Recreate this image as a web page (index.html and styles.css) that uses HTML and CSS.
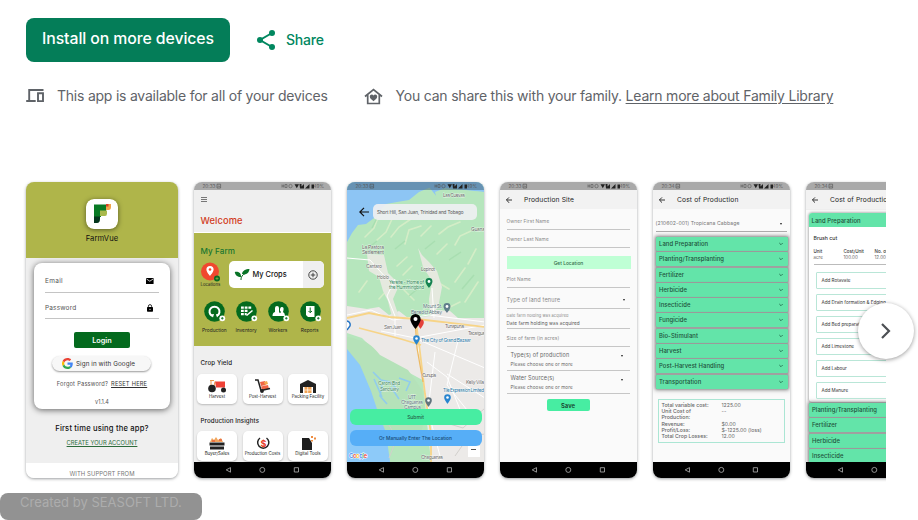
FILE: index.html
```html
<!DOCTYPE html>
<html lang="en">
<head>
<meta charset="utf-8">
<title>FarmVue</title>
<link rel="stylesheet" href="styles.css">
</head>
<body>
<svg class="defs" width="0" height="0">
  <symbol id="status" viewBox="0 0 138 8">
    <path d="M23 2.2h3.6v3.8H23zM24 4.8l.8-1 .9 1" fill="none" stroke="#4b4b4b" stroke-width=".6"/>
    <path d="M88 2.5v3M89.700 2.500v3M88 4h1.700M91 2.500h2v3h-2z" fill="none" stroke="#555" stroke-width=".6"/>
    <circle cx="96.500" cy="4.100" r="1.700" fill="none" stroke="#555" stroke-width=".6"/>
    <path d="M100.500 2.300h4.500l-2.200 3.900zM105.500 2h2v2.500l2.500-2.500v4.500h-4zM111 6.500l4.500-4.500v4.500zM117.500 2.500h2.500v4h-2.500z" fill="#222"/>
  </symbol>
  <symbol id="nav" viewBox="0 0 138 16">
    <path d="M36.500 5.600v4.600l-4.300-2.300zM100.300 5.700h4.200v4.300h-4.200z" fill="none" stroke="#b5b5b5" stroke-width=".8"/>
    <circle cx="68.300" cy="7.900" r="2.500" fill="none" stroke="#b5b5b5" stroke-width=".8"/>
  </symbol>
  <symbol id="back" viewBox="0 0 8 8"><path d="M7 4H1.500M4 1.400L1.400 4 4 6.600" fill="none" stroke="#222" stroke-width=".9"/></symbol>
  <symbol id="chev" viewBox="0 0 6 6"><path d="M1.300 2l1.700 1.700L4.700 2" fill="none" stroke="#1b5f43" stroke-width=".8"/></symbol>
  <symbol id="pin" viewBox="0 0 8 11"><path d="M4 0a3.800 3.800 0 0 0-3.800 3.800C.2 6.500 4 11 4 11s3.800-4.500 3.800-7.200A3.800 3.800 0 0 0 4 0z"/></symbol>
</svg>

<header class="actions">
  <button class="install">Install on more devices</button>
  <a class="share">
    <svg width="20" height="22" viewBox="0 0 20 22"><path d="M16 4L4 11l12 7" fill="none" stroke="#01875f" stroke-width="2"/><g fill="#01875f"><circle cx="16" cy="4" r="3"/><circle cx="4" cy="11" r="3"/><circle cx="16" cy="18" r="3"/></g></svg>
    <span>Share</span>
  </a>
</header>

<section class="notes">
  <div class="note">
    <svg width="19" height="16" viewBox="0 0 19 16"><path d="M17.500 2H3.200v10.500M.2 13h9.500M12 5.200h5v7.900h-5z" fill="none" stroke="#5f6368" stroke-width="1.900"/></svg>
    <span class="n1">This app is available for all of your devices</span>
  </div>
  <div class="note">
    <svg width="19" height="17" viewBox="0 0 19 17"><path d="M1 8.500l8.500-7 8.500 7M3.700 7v8.500h11.600V7" fill="none" stroke="#5f6368" stroke-width="1.700"/><path d="M9.500 13.200C7 11.200 5.800 10.200 5.800 8.500c0-2 2.600-2.700 3.700-1 1.100-1.700 3.700-1 3.700 1 0 1.700-1.200 2.700-3.700 4.700z" fill="#5f6368"/></svg>
    <span class="n2">You can share this with your family. <a class="learn">Learn more about Family Library</a></span>
  </div>
</section>

<main class="gallery-wrap">
<div class="gallery">

  <article class="shot login">
    <div class="brand">
      <svg class="logo" width="32" height="30" viewBox="0 0 32 30"><rect width="32" height="30" rx="8" fill="#fff"/><path d="M8 5.500h13v5.500h-1v1h-5v6H8z" fill="#087a24"/><path d="M8 17.500h6v2.500q0 4-3 4H8z" fill="#04361d"/><path d="M14 11.500h7v3q0 2.500-2 2.500h-5z" fill="#a9b94c"/><path d="M20 5h5v3q0 3-2.500 3H20z" fill="#f0a44b"/><path d="M20 5h2.500v2.500H20z" fill="#d6402a"/></svg>
      <span>FarmVue</span>
    </div>
    <div class="card">
      <div class="field"><span>Email</span><svg width="8" height="6" viewBox="0 0 8 6"><rect width="7.600" height="6" rx=".6"/><path d="M.5 1l3.300 2.200L7.100 1" fill="none" stroke="#fff" stroke-width=".8"/></svg></div>
      <div class="field pass"><span>Password</span><svg width="8" height="8" viewBox="0 0 8 8"><rect x="1" y="3" width="6" height="4.800" rx=".7"/><path d="M2.400 3.500V2.200a1.600 1.600 0 0 1 3.200 0v1.300" fill="none" stroke="#000" stroke-width=".8"/><circle cx="4" cy="5.300" r=".6" fill="#fff"/></svg></div>
      <button class="go">Login</button>
      <button class="google"><svg width="11" height="11" viewBox="0 0 48 48"><path fill="#EA4335" d="M24 9.500c3.540 0 6.710 1.220 9.210 3.600l6.850-6.850C35.900 2.380 30.470 0 24 0 14.620 0 6.510 5.380 2.560 13.220l7.980 6.190C12.430 13.720 17.740 9.500 24 9.500z"/><path fill="#4285F4" d="M46.980 24.550c0-1.570-.15-3.090-.38-4.550H24v9.020h12.940c-.58 2.960-2.260 5.480-4.780 7.180l7.730 6c4.510-4.180 7.090-10.360 7.090-17.650z"/><path fill="#FBBC05" d="M10.530 28.590c-.48-1.450-.76-2.990-.76-4.590s.27-3.140.76-4.590l-7.980-6.190C.92 16.460 0 20.120 0 24s.92 7.540 2.560 10.780l7.970-6.190z"/><path fill="#34A853" d="M24 48c6.480 0 11.930-2.130 15.890-5.810l-7.730-6c-2.150 1.450-4.920 2.300-8.160 2.300-6.260 0-11.570-4.220-13.470-9.910l-7.980 6.190C6.510 42.620 14.620 48 24 48z"/></svg><span>Sign in with Google</span></button>
      <p class="forgot">Forgot Password? <a>RESET HERE</a></p>
      <p class="ver">v1.1.4</p>
    </div>
    <p class="first">First time using the app?</p>
    <a class="create">CREATE YOUR ACCOUNT</a>
    <p class="support">WITH SUPPORT FROM</p>
  </article>

  <article class="shot phone home">
    <div class="bar"><svg><use href="#status"/></svg><span>20:33</span><span>49%</span></div>
    <div class="screen">
      <div class="welcome"><svg width="6" height="5" viewBox="0 0 6 5"><path d="M0 .5h6M0 2.500h6M0 4.500h6" stroke="#444" stroke-width=".7"/></svg><b>Welcome</b></div>
      <div class="farm">
        <h3>My Farm</h3>
        <div class="crops">
          <div class="loc"><svg width="20" height="20" viewBox="0 0 20 20"><circle cx="9" cy="9.500" r="9" fill="#f0482f"/><path d="M9 4a3.600 3.600 0 0 0-3.600 3.600C5.400 10.200 9 14 9 14s3.600-3.800 3.600-6.400A3.600 3.600 0 0 0 9 4z" fill="#fff"/><circle cx="9" cy="7.500" r="1.300" fill="#f0482f"/><circle cx="16" cy="16.500" r="3" fill="#0a6b22"/><path d="M14.500 16.500h3M16 15v3" stroke="#9db84b" stroke-width=".6"/></svg><span>Locations</span></div>
          <div class="mycrops"><svg width="16" height="13" viewBox="0 0 16 13"><path d="M7 12C6.500 9 9 6.500 11 5.500" fill="none" stroke="#0a6b22" stroke-width="1"/><path d="M.8 4C4 3.200 7.500 5 7 9 3.500 9 1 7 .8 4zM8 6C8.500 2.500 11.500 1 15.500 1 15 5 12 7.500 8 6z" fill="#087326"/></svg><span>My Crops</span><i><svg width="10" height="10" viewBox="0 0 9 9"><circle cx="4.500" cy="4.500" r="3.800" fill="none" stroke="#333" stroke-width=".8"/><path d="M2.500 4.500h4M4.500 2.500v4" stroke="#333" stroke-width=".8"/></svg></i></div>
        </div>
        <div class="quads">
          <div><svg viewBox="0 0 22 22"><circle cx="10.500" cy="10.500" r="10.300" fill="#046a1e"/><path d="M8 15a5 5 0 1 1 5 0" fill="none" stroke="#fff" stroke-width="2"/><path d="M6 13.500l4-.5-1 3.500zM12 13l3 .5-2 3z" fill="#fff"/><circle cx="18.300" cy="17.300" r="2.900" fill="#fff"/><path d="M17 17.300h2.600M18.300 16v2.600" stroke="#046a1e" stroke-width=".8"/></svg><span>Production</span></div>
          <div><svg viewBox="0 0 22 22"><circle cx="10.500" cy="10.500" r="10.300" fill="#046a1e"/><path d="M5 5.500h2.800v2.300H5zM8.700 5.500h2.800v2.300H8.700zM12.400 5.500h2.800v2.300h-2.800zM5 8.800h2.800v2.300H5zM8.700 8.800h2.800v2.300H8.700zM5 12h2.800v2.300H5zM8.700 12h2v2.300h-2z" fill="#fff"/><path d="M10.500 14.500l6-5" stroke="#fff" stroke-width="1.600"/><circle cx="18.300" cy="17.300" r="2.900" fill="#fff"/><path d="M17 17.300h2.600M18.300 16v2.600" stroke="#046a1e" stroke-width=".8"/></svg><span>Inventory</span></div>
          <div><svg viewBox="0 0 22 22"><circle cx="10.500" cy="10.500" r="10.300" fill="#046a1e"/><path d="M4.500 15q0-3.500 2.500-4V7q0-2 2-2t2 2v4l3 4zM10 15l3-4q-1.500-1-1-3 .5-2.300 2-2 2 0 1.500 3l-.5 2q2 1 2 4z" fill="#fff"/><circle cx="18.300" cy="17.300" r="2.900" fill="#fff"/><path d="M17 17.300h2.600M18.300 16v2.600" stroke="#046a1e" stroke-width=".8"/></svg><span>Workers</span></div>
          <div><svg viewBox="0 0 22 22"><circle cx="10.500" cy="10.500" r="10.300" fill="#046a1e"/><path d="M6 5h8.500v11H8L6 14z" fill="#fff"/><path d="M10.200 6.500v5M8.500 10l1.700 1.700L12 10" fill="none" stroke="#046a1e" stroke-width="1"/><circle cx="18.300" cy="17.300" r="2.900" fill="#fff"/><path d="M17 17.300h2.600M18.300 16v2.600" stroke="#046a1e" stroke-width=".8"/></svg><span>Reports</span></div>
        </div>
      </div>
      <h4>Crop Yield</h4>
      <div class="tiles">
        <div><svg viewBox="0 0 20 14"><path d="M8 2.500h10v6H9z" fill="#ef4136"/><path d="M3 1.500h4M4 2v4M8 2.500L7 7" stroke="#eb8b35" stroke-width=".9"/><circle cx="5" cy="9.500" r="3.800" fill="#222"/><circle cx="16.500" cy="11" r="2.500" fill="#222"/></svg><span>Harvest</span></div>
        <div><svg viewBox="0 0 20 14"><path d="M7 3l5-1 1 4-5 1zM8 7.500l7-1.500 1 4-7 1z" fill="#ef6545"/><path d="M11 3l3-1 1 3-3 1z" fill="#f3a94e"/><path d="M2 1h3l3 10.500L17 9.500" fill="none" stroke="#222" stroke-width="1.500"/><circle cx="9" cy="12" r="1.900" fill="#222"/></svg><span>Post-Harvest</span></div>
        <div><svg viewBox="0 0 20 14"><path d="M2 5l8-4 8 4v9h-3V7H5v7H2z" fill="#222"/><path d="M3 5h14v3H3z" fill="#222"/><path d="M6.500 8h7v6h-7z" fill="#f2a354"/><path d="M9.700 8v6M6.500 11h7" stroke="#fff" stroke-width=".7"/></svg><span>Packing Facility</span></div>
      </div>
      <h4 class="ins">Production Insights</h4>
      <div class="tiles">
        <div><svg viewBox="0 0 20 14"><path d="M3 6l2-4 2 2 2-3 2 3 3-2 2 4z" fill="#f2a65e"/><path d="M5 5h3M12 4h3" stroke="#e0402b" stroke-width="1.200"/><path d="M2.500 6.500h15v3h-15zM3 10.500h14v3H3z" fill="#222"/></svg><span>Buyer/Sales</span></div>
        <div><svg viewBox="0 0 20 14"><path d="M7 2a5.600 5.600 0 1 0 6.500 0" fill="none" stroke="#222" stroke-width="1.500"/><text x="7.400" y="11" font-size="9" font-weight="700" fill="#e63b26">$</text></svg><span>Production Costs</span></div>
        <div><svg viewBox="0 0 20 14"><path d="M4 2h7l3 5v7H4z" fill="#1e1e1e"/><path d="M13 0h2v2h-2zM16 1.500h2v2h-2zM13 4h2v1.500h-2z" fill="#ee8c40"/></svg><span>Digital Tools</span></div>
      </div>
    </div>
    <svg class="nav"><use href="#nav"/></svg>
  </article>

  <article class="shot phone mapshot">
    <svg class="map" width="138" height="280" viewBox="0 0 138 280">
      <rect width="138" height="280" fill="#b6e6bd"/>
      <path d="M0 0h92l-8 5-12 5-10 8-12 2-11 2-7 7-5 7-8 6-8 1-6 8-5 9z" fill="#8dc5f4"/>
      <path d="M78 0h60v10l-28-2-11 8-9-1z" fill="#8dc5f4"/><path d="M88 10l10-4 20 2 20 2v8H90z" fill="#b6e6bd"/>
      <g fill="none" stroke="#dcefc9" stroke-width="1.600" opacity=".8" stroke-linecap="round"><path d="M18 55l9-9 5-13M30 58l9-8 7-15M44 55l8-10 12-8M58 62l4-14 12-4M74 54l10-10M92 52l9-7 12-5M108 63l5-9 11-5M121 82l8-15M90 72l10-10M65 84l-9 9M108 100l10-14M118 120l13-20M40 108l-8 9M92 101l10 6M50 84l10-9M12 110l8-11M67 118l-10-10M101 126l12-6"/></g>
      <g fill="none" stroke="#a5dcae" stroke-width="1.500" opacity=".8"><path d="M20 67l10-8M48 67l10-8M78 67l10-8M102 78l12-8M74 104l-12 10M115 107l12-14M25 46l5-10"/></g>
      <path d="M0 124l20 3 12-2 10 8 10-4 9 7 22-2 6-6 14 1 8 7h27v60l-30 1-27 4-22-12-26-15-18-18-15-5z" fill="#ece9e7"/>
      <path d="M72 158l66-14v136H84l-6-60z" fill="#eceae8"/>
      <path d="M20 72l17 1 4 18 8 8 1 9-4 9 6 18h-7l-4-16-5-10-4-14-10-6zM71 66l4 7 7 7 8 9 5 16-4 21-8 7-1-16 3-18-9-14z" fill="#e5e9df"/>
      <path d="M0 163q14 4 17 15l10 20 8 15 2 22 6 45H0z" fill="#8dcaf9"/>
      <path d="M0 155q6 0 11 3 10 0 22 15l28 15 14 20 4 28-6 16-33 1-8-20-8-24-11-26-13-16z" fill="#b5e2b9"/>
      <g fill="none" stroke="#91ccec" stroke-width="1.600"><path d="M26 190l8 8 9 2 8 8M35 203l-2 11 7 8M27 197l8 18M44 205l8 12M52 196l11 4-4 9"/></g>
      <g fill="none" stroke="#fff" stroke-width="1"><path d="M0 133l24-5 22 10 36-5 56 7M48 97l-8 17 8 20 0 20M34 149l34 7 70-13M70 148l2 24M72 158l66 28M80 180l20 15 14 35M88 170l-7 58 13 50M100 192l38 24M112 155l-12 48 24 30M40 97l-17-19-23-2M85 106l2 30"/></g>
      <g fill="none" stroke="#f7d487" stroke-width="1.800"><path d="M0 136l22-5 20 4 28 2 68 8M69 140l4 30 5 42 6 40v28M12 146l42 11 20 6"/></g>
      <path d="M68 138l2 28 6 34" fill="none" stroke="#edba64" stroke-width="1.300"/>
      <path d="M108 274l14-20 16-2M96 240l20 6 22-20M40 240l10 16-8 20" fill="none" stroke="#d2d0cc"/>
      <g class="places">
        <text x="96" y="15" textLength="22">Las Cuevas</text><text x="124" y="49" textLength="14">Guana</text>
        <text x="15" y="67" textLength="22">La Pastora</text><text x="15" y="72" textLength="22">Settlement</text>
        <text x="19" y="86" textLength="16">Cantaro</text><text x="30" y="97" textLength="12">Hololo</text>
        <text x="74" y="89" textLength="14">Lopinot</text>
        <g fill="#32865b"><text x="42" y="102" textLength="35">Yerette - Home of</text><text x="42" y="107" textLength="35">the Hummingbird</text></g>
        <g fill="#607680"><text x="76" y="126" textLength="19">Mount St.</text><text x="64" y="132" textLength="31">Benedict Abbey</text></g>
        <text x="37" y="147" textLength="18">San Juan</text><text x="98" y="146" textLength="19">Tunapuna</text>
        <text x="121" y="153" textLength="17">Tacarigua</text>
        <text x="74" y="160" textLength="50" class="shop">The City of Grand Bazaar</text>
        <text x="75" y="195" textLength="14">Cunupia</text><text x="119" y="202" textLength="18">Kelly Villa</text>
        <g fill="#41865e"><text x="31" y="203" textLength="22">Caroni Bird</text><text x="33" y="209" textLength="19">Sanctuary</text></g>
        <text x="96" y="210" textLength="41" class="shop">Tile Expression Limited</text>
        <g fill="#607680"><text x="61" y="217" textLength="8">UTT</text><text x="54" y="222" textLength="22">Chaguanas</text><text x="57" y="227" textLength="17">Campus</text></g>
        <text x="74" y="277" textLength="22">Chaguanas</text>
      </g>
      <use href="#pin" x="78" y="96" width="8" height="10" fill="#148251"/><circle cx="82" cy="99.500" r="1.400" fill="#fff"/>
      <use href="#pin" x="96" y="121" width="8" height="10" fill="#607d8b"/><circle cx="100" cy="124.500" r="1.400" fill="#fff"/>
      <use href="#pin" x="66" y="153" width="7" height="10" fill="#2885cf"/><circle cx="69.500" cy="156.500" r="1.300" fill="#fff"/>
      <use href="#pin" x="97" y="212" width="7" height="10" fill="#2885cf"/><circle cx="100.500" cy="215.500" r="1.300" fill="#fff"/>
      <use href="#pin" x="78" y="215" width="7" height="10" fill="#60747e"/><circle cx="81.500" cy="218.500" r="1.300" fill="#fff"/>
      <use href="#pin" x="70" y="137" width="7" height="10" fill="#e4413a"/>
      <use href="#pin" x="62" y="132" width="13" height="15"/><circle cx="68.500" cy="137" r="2" fill="#fff"/>
      <path d="M0 139q4 1 3 5l-3 4" fill="#fff" stroke="#2374c6" stroke-width="1.400"/>
      <g class="gmark"><text x="2" y="276" textLength="18" fill="#4285f4">G<tspan fill="#ea4335">o</tspan><tspan fill="#fbbc05">o</tspan><tspan fill="#4285f4">g</tspan><tspan fill="#34a853">l</tspan><tspan fill="#ea4335">e</tspan></text></g>
    </svg>
    <div class="mapui">
      <div class="bar clear"><svg><use href="#status"/></svg><span>20:33</span><span>49%</span></div>
      <div class="search"><svg width="10" height="10" viewBox="0 0 10 10"><path d="M10 5H1M5 .8L.8 5 5 9.200" fill="none" stroke="#111" stroke-width="1.200"/></svg><span>Short Hill, San Juan, Trinidad and Tobago</span></div>
      <button class="submit">Submit</button>
      <button class="manual">Or Manually Enter The Location</button>
      <b class="minus"></b>
    </div>
    <svg class="nav"><use href="#nav"/></svg>
  </article>

  <article class="shot phone site">
    <div class="bar"><svg><use href="#status"/></svg><span>20:33</span><span>49%</span></div>
    <div class="title"><svg width="8" height="8"><use href="#back"/></svg><span>Production Site</span></div>
    <div class="screen form">
      <div class="line a">Owner First Name</div>
      <div class="line b">Owner Last Name</div>
      <button class="getloc">Get Location</button>
      <div class="line c">Plot Name</div>
      <div class="line d sel">Type of land tenure</div>
      <div class="line e"><small>Date farm holding was acquired</small><em>Date farm holding was acquired</em></div>
      <div class="line f">Size of farm (in acres)</div>
      <div class="line g sel"><strong>Type(s) of production</strong><u>Please choose one or more</u></div>
      <div class="line h sel"><strong>Water Source(s)</strong><u>Please choose one or more</u></div>
      <button class="save">Save</button>
    </div>
    <svg class="nav"><use href="#nav"/></svg>
  </article>

  <article class="shot phone cost">
    <div class="bar"><svg><use href="#status"/></svg><span>20:34</span><span>49%</span></div>
    <div class="title"><svg width="8" height="8"><use href="#back"/></svg><span>Cost of Production</span></div>
    <div class="screen">
      <div class="pick sel">(210602-001) Tropicana Cabbage</div>
      <ul class="acc">
        <li>Land Preparation<svg><use href="#chev"/></svg></li>
        <li>Planting/Transplanting<svg><use href="#chev"/></svg></li>
        <li>Fertilizer<svg><use href="#chev"/></svg></li>
        <li>Herbicide<svg><use href="#chev"/></svg></li>
        <li>Insecticide<svg><use href="#chev"/></svg></li>
        <li>Fungicide<svg><use href="#chev"/></svg></li>
        <li>Bio-Stimulant<svg><use href="#chev"/></svg></li>
        <li>Harvest<svg><use href="#chev"/></svg></li>
        <li>Post-Harvest Handling<svg><use href="#chev"/></svg></li>
        <li>Transportation<svg><use href="#chev"/></svg></li>
      </ul>
      <dl class="totals">
        <dt>Total variable cost:</dt><dd>1225.00</dd>
        <dt>Unit Cost of Production:</dt><dd>--</dd>
        <dt>Revenue:</dt><dd>$0.00</dd>
        <dt>Profit/Loss:</dt><dd>$-1225.00 (loss)</dd>
        <dt>Total Crop Losses:</dt><dd>12.00</dd>
      </dl>
    </div>
    <svg class="nav"><use href="#nav"/></svg>
  </article>

  <article class="shot phone land">
    <div class="bar"><svg><use href="#status"/></svg><span>20:34</span></div>
    <div class="title"><svg width="8" height="8"><use href="#back"/></svg><span>Cost of Production</span></div>
    <div class="screen">
      <div class="panel">
        <h5>Land Preparation</h5>
        <p class="brush">Brush cut</p>
        <div class="cols"><div><b>Unit</b>acre</div><div><b>Cost/Unit</b>100.00</div><div><b>No. of units</b>12.00</div></div>
        <div class="adds">
          <span>Add Rotavate</span><span>Add Drain formation &amp; Edging</span><span>Add Bed preparation</span><span>Add Limestone</span><span>Add Labour</span><span>Add Manure</span>
        </div>
      </div>
      <ul class="acc"><li>Planting/Transplanting</li><li>Fertilizer</li><li>Herbicide</li><li>Insecticide</li></ul>
    </div>
    <svg class="nav"><use href="#nav"/></svg>
  </article>
</div>
<button class="next"><svg width="12" height="18" viewBox="0 0 12 18"><path d="M2 2l7 7-7 7" fill="none" stroke="#4d5054" stroke-width="2.200"/></svg></button>
</main>

<div class="credit">Created by SEASOFT LTD.</div>
</body>
</html>
```
FILE: styles.css
```css
* { box-sizing: border-box; }
body { margin: 0; width: 918px; height: 520px; overflow: hidden; background: #fff; font-family: Inter, "Open Sans", sans-serif; position: relative; }
p, h3, h4, h5, ul, dl, dd { margin: 0; padding: 0; font-weight: 500; }
button { border: 0; padding: 0; font-family: inherit; display: block; }
.defs { position: absolute; }
svg { flex: none; display: block; }

.actions { display: flex; align-items: center; padding: 18px 0 0 26px; height: 62px; }
.install { width: 204px; height: 44px; border-radius: 8px; background: #047d58; color: #fff; font-size: 15.800px; font-weight: 500; letter-spacing: -.08px; line-height: 42px; padding-bottom: 2px; white-space: nowrap; }
.share { display: flex; align-items: center; gap: 10px; margin-left: 26px; color: #01875f; font-size: 14px; font-weight: 500; letter-spacing: -.2px; }
.share span { line-height: 18px; margin-bottom: 1px; }
.notes { display: flex; height: 20px; margin: 24px 0 0 26px; gap: 36px; color: #5f6368; font-size: 14px; line-height: 20px; white-space: nowrap; }
.note { display: flex; align-items: center; gap: 12px; }
.note:first-child { width: 302px; }
.n1 { letter-spacing: -.23px; }
.n2 { letter-spacing: -.21px; margin-left: .6px; }
.learn { text-decoration: underline; text-underline-offset: 2px; }

.gallery-wrap { position: relative; width: 918px; height: 296px; margin-top: 76px; }
.gallery { display: flex; gap: 15.500px; width: 860px; margin-left: 26px; height: 296px; clip-path: inset(-10px 0 -10px -10px); }
.shot { flex: none; width: 137.500px; height: 296px; border-radius: 8px; overflow: hidden; box-shadow: 0 1px 3px rgba(60,64,67,.5); display: flex; flex-direction: column; white-space: nowrap; position: relative; color: #222; }
.login { width: 152px; background: #efefef; }

.brand { height: 76px; flex: none; background: #afb54a; padding-top: 17px; display: flex; flex-direction: column; align-items: center; font-size: 7.600px; letter-spacing: .1px; gap: 5px; line-height: 10px; color: #111; }
.logo { border-radius: 8px; box-shadow: 0 1px 5px rgba(0,0,0,.5); }
.card { margin: 5px 8px 0; height: 146px; flex: none; border-radius: 8px; background: #fff; box-shadow: 0 1px 6px rgba(0,0,0,.6); padding: 6px 11px 0; }
.field { height: 24px; padding: 0 5px 0 0; border-bottom: 1px solid #c4c4c4; display: flex; align-items: center; justify-content: space-between; font-size: 6.500px; color: #555; letter-spacing: .3px; }
.pass { height: 26px; padding-top: 5px; letter-spacing: .15px; }
.go { margin: 13px 0 0 29px; width: 56px; height: 16px; border-radius: 2px; background: #046a1e; color: #fff; font-size: 7.300px; font-weight: 600; }
.google { margin: 8px 0 0 7px; width: 99px; height: 15px; border-radius: 8px; background: #f7f7f7; box-shadow: 0 1px 2px rgba(0,0,0,.4); display: flex; align-items: center; gap: 3px; padding-left: 10px; font-size: 6.300px; letter-spacing: .08px; color: #333; }
.forgot { margin-top: 8px; line-height: 10px; text-align: center; font-size: 5.700px; color: #555; letter-spacing: .17px; word-spacing: .3px; font-weight: 400; }
.forgot a { text-decoration: underline; color: #333; margin-left: 1px; }
.ver { margin-top: 8px; text-align: center; font-size: 5.500px; line-height: 10px; color: #555; font-weight: 400; }
.first { margin-top: 14px; text-align: center; font-size: 7.600px; letter-spacing: .18px; line-height: 12px; color: #111; }
.create { margin-top: 3px; text-align: center; font-size: 5.800px; line-height: 10px; color: #2b6b3b; text-decoration: underline; }
.support { margin-top: 15px; height: 16px; background: #fff; text-align: center; font-size: 5.900px; line-height: 21px; color: #777; letter-spacing: .08px; font-weight: 400; }

.bar { position: relative; height: 8px; flex: none; background: #a9a9a9; display: flex; justify-content: space-between; padding: 0 7px 0 9px; font-size: 4.700px; line-height: 8px; color: #5b5b5b; }
.bar svg { position: absolute; left: 0; top: 0; width: 138px; height: 8px; }
.clear { background: rgba(73,103,125,.55); }
.nav { width: 138px; height: 16px; background: #000; margin-top: auto; z-index: 1; }
.screen { height: 272px; flex: none; overflow: hidden; }
.title + .screen { height: 253px; }

.home .screen { background: #efefef; }
.welcome { height: 43px; padding: 7px 0 0 7px; border-bottom: 1px solid #fff; }
.welcome b { display: block; margin-top: 11.500px; font-size: 9.300px; letter-spacing: .1px; line-height: 14px; color: #d23c1c; font-weight: 500; }
.farm { height: 113px; background: #afb54a; padding: 11px 7px 0; }
.farm h3 { font-size: 8.100px; letter-spacing: .1px; line-height: 14px; color: #19752f; font-weight: 500; }
.crops { display: flex; margin-top: 3px; height: 29px; }
.loc { width: 28px; font-size: 4.300px; line-height: 5px; margin-top: 1px; height: 30px; }
.loc span { display: block; }
.mycrops { width: 95px; height: 27px; border-radius: 5px; background: #fff; display: flex; align-items: center; font-size: 7.400px; gap: 3px; padding-left: 5px; font-weight: 500; overflow: hidden; color: #111; }
.mycrops i { background: #efefef; width: 21px; height: 27px; margin-left: auto; padding: 8.500px 5px; }
.quads { display: flex; justify-content: space-between; width: 127px; margin: 11px 0 0 -2px; }
.quads div { width: 31.700px; display: flex; flex-direction: column; align-items: center; font-size: 4.800px; line-height: 8px; gap: 3px; }
.quads svg { width: 22px; height: 22px; margin-left: 2px; }
.home h4 { font-size: 6.200px; line-height: 10px; margin: 12px 0 6px 7px; letter-spacing: .08px; }
.tiles { display: flex; gap: 5.500px; padding-left: 3.500px; }
.tiles div { width: 40px; height: 30px; border-radius: 5px; background: #fff; box-shadow: 0 1px 2px rgba(0,0,0,.22); display: flex; flex-direction: column; align-items: center; padding-top: 5px; font-size: 4.400px; line-height: 7px; }
.tiles svg { width: 20px; height: 14px; }
.home h4.ins { margin: 12px 0 5px 7px; }

.map { position: absolute; left: 0; top: 0; }
.places { font-size: 5px; fill: #696969; stroke: #fff; stroke-width: .8px; stroke-opacity: .6; paint-order: stroke; }
.shop { fill: #287aa8; }
.gmark { font-size: 6px; font-weight: 600; stroke: #fff; stroke-width: 1px; paint-order: stroke; }
.mapui { position: relative; display: flex; flex-direction: column; height: 280px; }
.search { display: flex; align-items: center; margin: 14px 0 0 12px; height: 16px; gap: 4px; }
.search span { width: 104px; height: 16px; border-radius: 5px; background: rgba(238,239,241,.93); font-size: 4.700px; line-height: 16px; color: #555; padding-left: 4.500px; letter-spacing: -.13px; }
.submit, .manual { width: 132px; margin-left: 3px; height: 16px; border-radius: 6px; font-size: 5px; font-weight: 500; color: #255e49; background: #47eda2; }
.submit { margin-top: 189px; flex: none; }
.manual { margin-top: 5px; background: #56aef7; color: #164b75; flex: none; font-size: 4.850px; }
.minus { width: 12px; height: 11px; background: #fff; margin: 0 0 0 121px; border-top: 3px solid #fff; }
.minus::before { content: ""; display: block; width: 5px; height: 1px; margin: 0 3px; background: #555; }

.site, .cost, .land { background: #fafafa; }
.title { height: 19px; flex: none; background: #f2f2f2; display: flex; align-items: center; padding-left: 5px; font-size: 6.700px; gap: 11.500px; letter-spacing: .13px; }
.form { padding: 0 7px; }
.line { border-bottom: 1px solid #c6c6c6; font-size: 4.800px; color: #888; letter-spacing: .12px; position: relative; }
.a { height: 21px; line-height: 24px; }
.b { height: 18px; line-height: 18px; }
.getloc { width: 124px; height: 13px; margin-top: 8px; background: #bfffd5; color: #356c4b; font-size: 4.900px; font-weight: 500; }
.c { height: 19px; line-height: 20px; }
.d { height: 21px; line-height: 25px; font-size: 5.600px; }
.e { height: 20px; padding-top: 4px; line-height: 6.500px; }
.e small, .e em { display: block; font-style: normal; font-size: 3.900px; }
.e em { font-size: 4.650px; color: #555; }
.f { height: 18px; line-height: 19px; }
.g, .h { height: 24px; padding: 4px 0 0 4px; }
.g strong, .h strong, .g u, .h u { display: block; font-weight: 400; text-decoration: none; font-size: 5.500px; line-height: 9px; color: #666; }
.h { height: 23px; padding-top: 3px; }
.g u, .h u { font-size: 4.600px; }
.sel::after { content: ""; position: absolute; right: 5px; top: 11px; border: 1.600px solid transparent; border-top: 2px solid #222; border-bottom: 0; }
.g.sel::after, .h.sel::after { right: 7px; top: 8px; }
.save { width: 43px; height: 12px; margin: 5px auto 0 40px; border-radius: 2px; background: #47eda2; font-size: 5.900px; font-weight: 600; color: #173d2c; }

.pick { height: 23px; margin: 0 3px; line-height: 29px; font-size: 5.200px; color: #777; border-bottom: 1px solid #aaa; position: relative; letter-spacing: .05px; }
.pick.sel::after { top: 14px; }
.acc { list-style: none; width: 132px; margin: 5px 0 0 3px; background: #aaa; box-shadow: 0 0 4px 1px rgba(80,80,80,.65); display: grid; gap: 1.300px; }
.acc li { height: 14px; border-radius: 1px; background: #63e4a9; font-size: 5.900px; line-height: 14px; font-weight: 500; color: #1e5039; display: flex; justify-content: space-between; align-items: center; padding: 0 4px 0 3.500px; letter-spacing: .07px; box-shadow: 0 0 2px #888; }
.acc svg { width: 6px; height: 6px; }
.totals { width: 127px; height: 44px; margin: 10px 0 0 5px; border: 1px solid #abe6d4; padding: 2px 0 0 3px; display: grid; grid-template-columns: 60px 1fr; font-size: 5.200px; line-height: 6.300px; color: #666; align-content: start; }
.totals dt { white-space: normal; width: 50px; }
.totals dt:first-child, .totals dt:last-of-type { white-space: nowrap; }
.totals dd { font-weight: 400; }

.land .screen { border-top: 1px solid #eee; }
.panel { width: 132px; height: 188.500px; margin: 3px 0 0 3px; background: #fff; border-radius: 3px; box-shadow: 0 0 3px #777; overflow: hidden; }
.panel h5 { height: 14px; line-height: 15px; background: #63e4a9; font-size: 5.900px; font-weight: 500; color: #1e5039; padding-left: 3px; letter-spacing: .07px; }
.brush { font-size: 5.200px; line-height: 8px; margin: 7px 0 0 5px; color: #333; }
.cols { margin: 7px 5px 0; height: 16px; border-bottom: 1px solid #bbb; display: grid; grid-template-columns: 30px 31px 50px; font-size: 4.500px; line-height: 5.500px; color: #666; }
.cols b { display: block; color: #333; font-weight: 500; }
.adds { margin: 7px 0 0 7px; display: grid; gap: 5px; }
.adds span { height: 17px; line-height: 16px; border: 1px solid #b9e6d7; border-radius: 1px; padding-left: 5px; font-size: 4.600px; color: #333; }
.land .acc { margin-top: 1.500px; }

.next { position: absolute; left: 858px; top: 121px; width: 56px; height: 56px; border-radius: 50%; background: #fff; box-shadow: 0 1px 4px rgba(0,0,0,.4); display: flex; align-items: center; justify-content: center; }
.credit { position: absolute; left: 0; top: 493px; width: 202px; height: 27px; border-radius: 8px; background: #929292; color: #adadad; font-size: 13px; line-height: 19px; padding-left: 20px; letter-spacing: .02px; white-space: nowrap; }
```
